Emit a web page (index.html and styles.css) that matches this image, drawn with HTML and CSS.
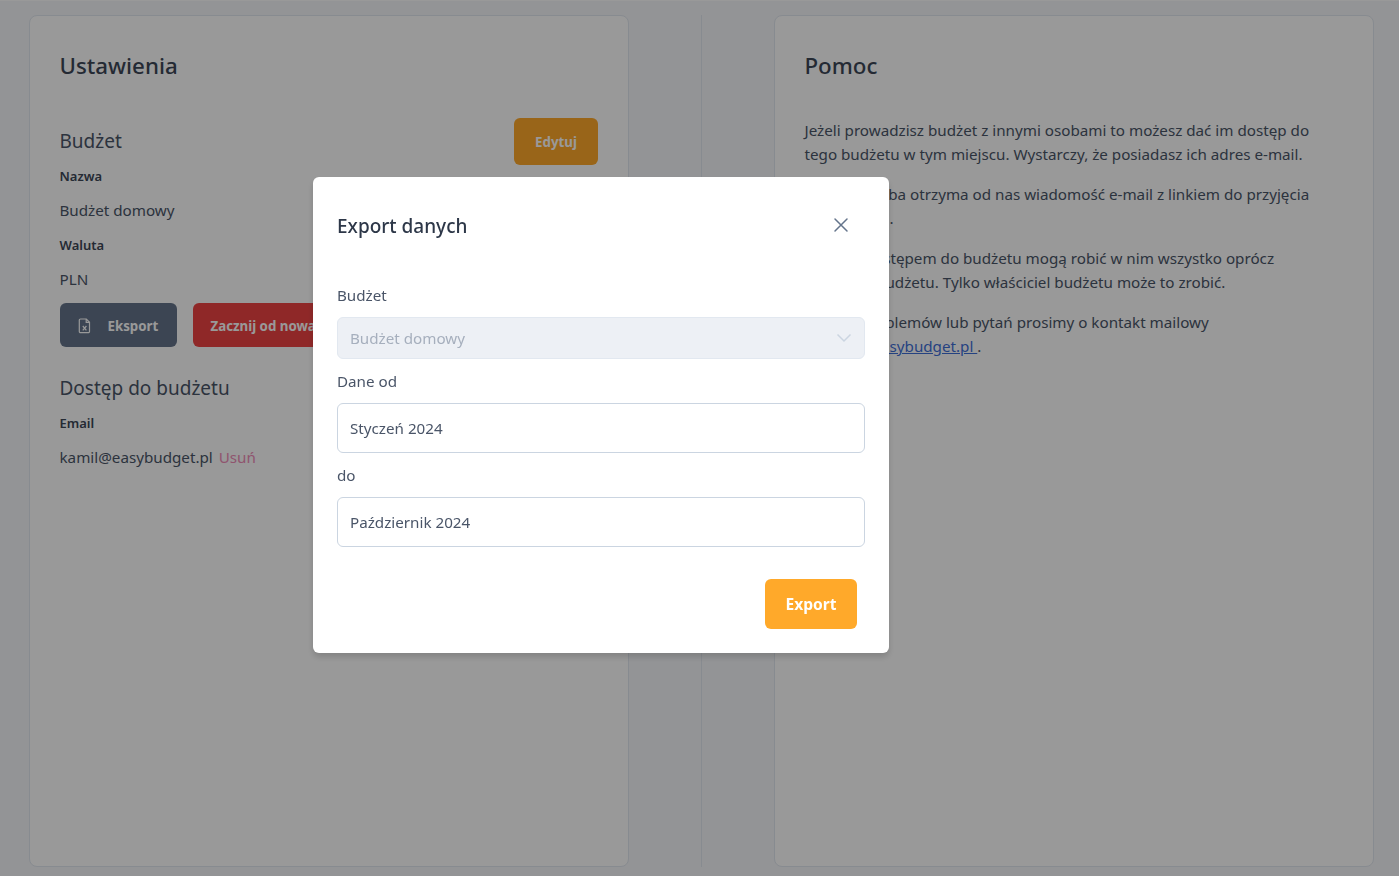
FILE: index.html
```html
<!DOCTYPE html>
<html lang="pl">
<head>
  <meta charset="UTF-8" />
  <title>Ustawienia</title>
  <link rel="stylesheet" href="styles.css">
</head>
<body>
  <div class="page">
    <section class="card">
      <h1>Ustawienia</h1>
      <div class="section-head">
        <h2>Budżet</h2>
        <button class="btn btn-orange btn-edit">Edytuj</button>
      </div>
      <div class="field-label first">Nazwa</div>
      <p class="field-value">Budżet domowy</p>
      <div class="field-label">Waluta</div>
      <p class="field-value">PLN</p>
      <div class="actions">
        <button class="btn btn-slate">
          <svg class="file-icon" width="14" height="16" viewBox="0 0 14 16" fill="none" stroke="currentColor" stroke-width="1.2">
            <path d="M2.5 1h5.8l3.2 3.3v9.2a1.2 1.2 0 0 1-1.2 1.2H2.5a1.2 1.2 0 0 1-1.2-1.2V2.2A1.2 1.2 0 0 1 2.5 1z" />
            <path d="M8.2 1v3.4h3.3M4.8 8l3.6 4.4M8.4 8l-3.6 4.4" />
          </svg>
          Eksport
        </button>
        <button class="btn btn-red">Zacznij od nowa</button>
      </div>
      <h2 class="access-title">Dostęp do budżetu</h2>
      <div class="field-label first">Email</div>
      <p class="field-value">kamil@easybudget.pl <a class="remove" href="#">Usuń</a></p>
    </section>

    <div class="divider"></div>

    <section class="card">
      <h1>Pomoc</h1>
      <div class="help">
        <p>Jeżeli prowadzisz budżet z innymi osobami to możesz dać im dostęp do<br>tego budżetu w tym miejscu. Wystarczy, że posiadasz ich adres e-mail.</p>
        <p>Podana osoba otrzyma od nas wiadomość e-mail z linkiem do przyjęcia<br>zaproszenia.</p>
        <p>Osoby z dostępem do budżetu mogą robić w nim wszystko oprócz<br>usunięcia budżetu. Tylko właściciel budżetu może to zrobić.</p>
        <p>W razie problemów lub pytań prosimy o kontakt mailowy<br><a href="#">kontakt@easybudget.pl </a>.</p>
      </div>
    </section>
  </div>

  <div class="overlay">
    <div class="modal">
      <div class="modal-head">
        <h3>Export danych</h3>
        <button class="close" aria-label="Zamknij">
          <svg width="24" height="24" viewBox="0 0 24 24" fill="none" stroke="currentColor" stroke-width="1.5" stroke-linecap="round">
            <path d="M6 6l12 12M18 6L6 18" />
          </svg>
        </button>
      </div>

      <label class="modal-label">Budżet</label>
      <div class="control control-disabled">
        Budżet domowy
        <svg width="16" height="10" viewBox="0 0 16 10" fill="none" stroke="currentColor" stroke-width="1.5">
          <path d="M1.5 1.5L8 8l6.5-6.5" />
        </svg>
      </div>

      <label class="modal-label">Dane od</label>
      <div class="control">Styczeń 2024</div>

      <label class="modal-label">do</label>
      <div class="control">Październik 2024</div>

      <div class="modal-foot">
        <button class="btn btn-orange btn-export">Export</button>
      </div>
    </div>
  </div>
</body>
</html>
```

FILE: styles.css
```css
* {
  box-sizing: border-box;
}

body {
  margin: 0;
  background: #f5f7fa;
  border-top: 1px solid #fff;
  font-family: "Noto Sans", "Open Sans", sans-serif;
  font-size: 15.2px;
  line-height: 24px;
  color: #4a5568;
}

.page {
  display: flex;
  height: 875px;
  padding: 14px 25px 9px 29px;
  gap: 72px;
}

.card {
  width: 600px;
  padding: 30px 30px 30px 29.5px;
  background: #fff;
  border: 1px solid #e2e8f0;
  border-radius: 8px;
}

.divider {
  width: 1px;
  background: #e2e8f0;
}

h1 {
  margin: 4px 0 0;
  font-size: 22.3px;
  line-height: 32px;
  font-weight: 500;
  color: #3d4757;
}

h2 {
  margin: 0;
  font-size: 19px;
  line-height: 28px;
  font-weight: 400;
}

.section-head {
  display: flex;
  justify-content: space-between;
  align-items: flex-start;
  margin-top: 36px;
}

.section-head h2 {
  margin-top: 9px;
}

.field-label {
  margin-top: 13px;
  font-size: 13px;
  line-height: 20px;
  font-weight: 600;
  color: #3d4757;
}

.field-label.first {
  margin-top: 1px;
}

.field-value {
  margin: 12px 0 12px;
}

.btn {
  border: none;
  border-radius: 6px;
  font-family: inherit;
  font-weight: 700;
  color: #fff;
  cursor: pointer;
}

.btn-orange {
  background: #ffa92a;
}

.btn-edit {
  width: 84px;
  height: 47px;
  font-size: 13.3px;
}

.actions {
  display: flex;
  gap: 16px;
  margin-top: 10px;
}

.btn-slate,
.btn-red {
  height: 44px;
  padding-top: 2px;
  font-size: 13.3px;
  white-space: nowrap;
}

.btn-slate {
  display: flex;
  align-items: center;
  gap: 16px;
  width: 117px;
  padding-left: 18px;
  background: #64748b;
}

.btn-red {
  padding-left: 18px;
  padding-right: 18px;
  background: #ef4444;
}

.access-title {
  margin-top: 27px;
  margin-bottom: 11px;
}

.remove {
  margin-left: 2px;
  color: #f08cb8;
  text-decoration: none;
}

.help {
  margin-top: 36px;
}

.help p {
  margin: 0 0 16px;
}

.help a {
  color: #3f6fd8;
}

.overlay {
  position: fixed;
  inset: 0;
  display: flex;
  justify-content: center;
  align-items: flex-start;
  padding: 177px 197px 0 0;
  background: rgba(0, 0, 0, 0.4);
}

.modal {
  width: 576px;
  height: 476px;
  padding: 24px;
  background: #fff;
  border-radius: 6px;
  box-shadow: 0 4px 6px rgba(0, 0, 0, 0.15);
}

.modal-head {
  display: flex;
  justify-content: space-between;
  align-items: center;
  height: 50px;
  margin-bottom: 33px;
}

.modal-head h3 {
  margin: 0;
  font-size: 19px;
  line-height: 28px;
  font-weight: 500;
  color: #2d3748;
}

.close {
  display: flex;
  margin-top: -2px;
  margin-right: 12px;
  padding: 0;
  border: none;
  background: none;
  color: #64748b;
}

.modal-label {
  display: block;
  margin-bottom: 11px;
  line-height: 22px;
}

.control {
  display: flex;
  justify-content: space-between;
  align-items: center;
  height: 50px;
  margin-bottom: 11px;
  padding: 0 12px;
  border: 1px solid #cbd5e1;
  border-radius: 6px;
}

.control-disabled {
  height: 42px;
  background: #edf0f5;
  border-color: #e2e8f0;
  color: #a6afbd;
}

.control-disabled svg {
  color: #cbd5e1;
}

.modal-foot {
  display: flex;
  justify-content: flex-end;
  margin-top: 32px;
  padding-right: 8px;
}

.btn-export {
  width: 92px;
  height: 50px;
  font-size: 15.6px;
}
```
